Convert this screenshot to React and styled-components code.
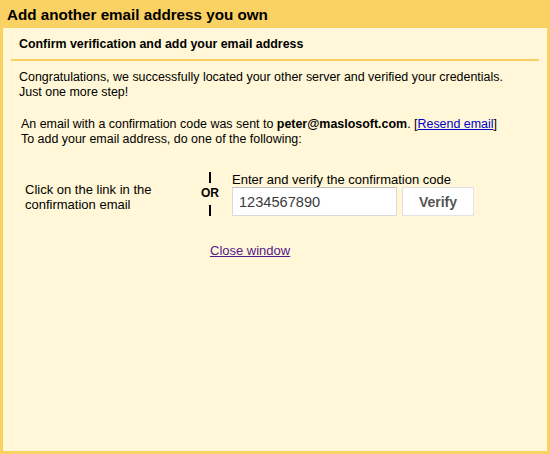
import React from "react";
import styled, { createGlobalStyle } from "styled-components";

const Global = createGlobalStyle`
  html, body { margin: 0; padding: 0; }
  body { font-family: "Liberation Sans", Arial, sans-serif; color: #000; }
`;

const Frame = styled.div`
  width: 550px;
  height: 454px;
  box-sizing: border-box;
  background: #fad163;
  padding: 0 3px 3px 3px;
  display: flex;
  flex-direction: column;
`;

const TitleBar = styled.div`
  height: 28px;
  display: flex;
  align-items: center;
  padding-left: 4px;
  padding-top: 1px;
  box-sizing: border-box;
  font-size: 15.2px;
  font-weight: bold;
`;

const Panel = styled.div`
  flex: 1;
  background: #fff7d7;
  padding: 0 8px;
  font-size: 13px;
`;

const Heading = styled.div`
  font-size: 12.4px;
  font-weight: bold;
  padding: 9px 8px 0 8px;
  height: 22px;
  border-bottom: 2px solid #fad163;
`;

const Para = styled.p`
  margin: ${(p) => p.$top}px 0 0 ${(p) => p.$indent}px;
  line-height: 15px;
  font-size: 12.45px;
`;

const Bold = styled.b`
  font-weight: bold;
`;

const Link = styled.a`
  color: ${(p) => (p.$visited ? "#551a8b" : "#0000cc")};
  text-decoration: underline;
  cursor: pointer;
`;

const Choices = styled.div`
  display: grid;
  grid-template-columns: 173px 34px auto;
  margin: 25px 0 0 14px;
  align-items: center;
`;

const LeftChoice = styled.div`
  line-height: 15px;
  padding-top: 6px;
`;

const OrColumn = styled.div`
  display: flex;
  flex-direction: column;
  align-items: center;
  font-weight: bold;
  font-size: 12px;
  width: 24px;
`;

const Bar = styled.div`
  width: 2px;
  height: 11px;
  background: #000;
`;

const OrText = styled.div`
  line-height: 14px;
  margin: 3px 0 5px;
`;

const RightChoice = styled.div`
  display: flex;
  flex-direction: column;
`;

const Label = styled.div`
  line-height: 15px;
`;

const Row = styled.div`
  display: flex;
  gap: 5px;
`;

const CodeInput = styled.input`
  width: 165px;
  height: 29px;
  box-sizing: border-box;
  border: 1px solid #d9d9d9;
  border-top-color: #c0c0c0;
  background: #fff;
  font-family: "Liberation Sans", Arial, sans-serif;
  font-size: 14.6px;
  color: #3a3a3a;
  padding: 0 6px;
  margin: 0;
  outline: none;
`;

const VerifyButton = styled.button`
  width: 72px;
  height: 29px;
  box-sizing: border-box;
  border: 1px solid #e2e2e2;
  background: #fff;
  font-family: "Liberation Sans", Arial, sans-serif;
  font-size: 14px;
  font-weight: bold;
  color: #555;
  padding: 0;
  margin: 0;
`;

const CloseRow = styled.div`
  margin: 27px 0 0 199px;
`;

export default function App() {
  return (
    <>
      <Global />
      <Frame>
        <TitleBar>Add another email address you own</TitleBar>
        <Panel>
          <Heading>Confirm verification and add your email address</Heading>
          <Para $top={9} $indent={8}>
            Congratulations, we successfully located your other server and verified your credentials.
            <br />
            Just one more step!
          </Para>
          <Para $top={17} $indent={10}>
            An email with a confirmation code was sent to <Bold>peter@maslosoft.com</Bold>. [
            <Link>Resend email</Link>]
            <br />
            To add your email address, do one of the following:
          </Para>
          <Choices>
            <LeftChoice>
              Click on the link in the
              <br />
              confirmation email
            </LeftChoice>
            <OrColumn>
              <Bar />
              <OrText>OR</OrText>
              <Bar />
            </OrColumn>
            <RightChoice>
              <Label>Enter and verify the confirmation code</Label>
              <Row>
                <CodeInput defaultValue="1234567890" />
                <VerifyButton>Verify</VerifyButton>
              </Row>
            </RightChoice>
          </Choices>
          <CloseRow>
            <Link $visited>Close window</Link>
          </CloseRow>
        </Panel>
      </Frame>
    </>
  );
}
